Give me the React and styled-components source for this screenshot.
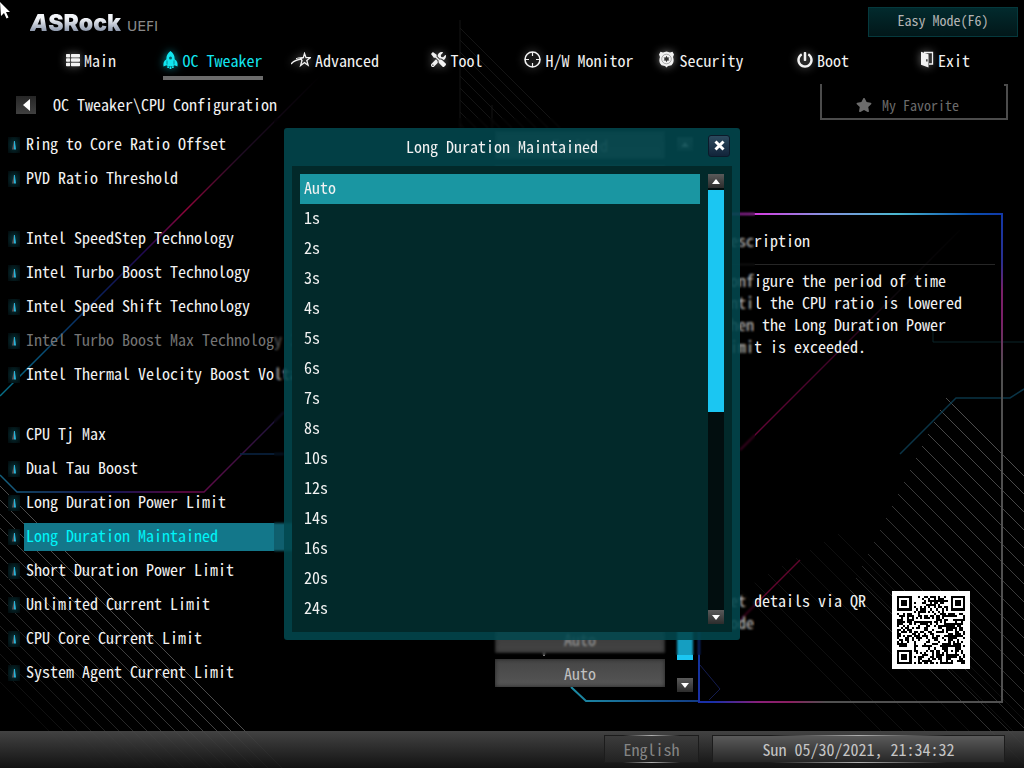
import React from "react";
import styled, { createGlobalStyle, css } from "styled-components";
import { FaThList, FaPowerOff, FaTools, FaStar } from "react-icons/fa";

const Global = createGlobalStyle`
  *, *::before, *::after { box-sizing: border-box; }
  html, body { margin: 0; background: #000; }
  body, button {
    font-family: "Noto Sans Mono CJK JP", "Liberation Mono", monospace;
    font-size: 16px;
    line-height: 22px;
    color: #f2f2f2;
  }
  button { margin: 0; padding: 0; border: 0; background: none; cursor: pointer; }
  ul, h1, h2, p { margin: 0; padding: 0; list-style: none; font-size: 16px; font-weight: 400; }
`;

const Page = styled.div`
  position: relative;
  display: flex;
  flex-direction: column;
  min-height: 100vh;
  overflow: hidden;
  isolation: isolate;
`;

const Backdrop = styled.svg`
  position: absolute;
  inset: 0;
  width: 100%;
  height: 100%;
  z-index: -1;
`;

const Pointer = styled.svg`
  position: absolute;
  left: 0;
  top: 2px;
  z-index: 5;
`;

const Header = styled.header`
  display: flex;
  justify-content: space-between;
  height: 44px;
  padding: 7px 6px 7px 30px;
`;

const Brand = styled.div`
  display: flex;
  align-items: baseline;
  gap: 6px;
  line-height: 32px;
`;

const BrandName = styled.span`
  font: 900 23px/32px Inter, sans-serif;
  background: linear-gradient(#f4f6fa 35%, #8e99ad 75%);
  background-clip: text;
  color: transparent;
`;

const BrandSuffix = styled.span`
  font: 14px/32px "DejaVu Sans", sans-serif;
  color: #8a8a8a;
`;

const EasyMode = styled.button`
  width: 150px;
  height: 30px;
  padding-bottom: 4px;
  border: 1px solid #05393d;
  background: linear-gradient(#022a2d, #021719);
  font-size: 14px;
  color: #b4b4b4;
`;

const Nav = styled.nav`
  display: grid;
  grid-template-columns: repeat(8, 1fr);
  justify-items: center;
  height: 40px;
  padding: 0 18px 0 30px;
`;

const Tab = styled.button`
  display: flex;
  align-items: center;
  gap: 4px;
  height: 36px;
  padding-bottom: 1px;
  border-bottom: 4px solid ${(p) => (p.$active ? "#6c6c6c" : "transparent")};
  color: ${(p) => (p.$active ? "#12e6f0" : "#f2f2f2")};
  white-space: nowrap;
  svg { flex: none; filter: drop-shadow(0 0 4px ${(p) => (p.$active ? "#0a8a96" : "#777")}); }
`;

const Crumbs = styled.div`
  display: flex;
  align-items: center;
  height: 36px;
  margin-bottom: 7px;
  padding: 0 16px;
`;

const BackButton = styled.button`
  display: grid;
  place-items: center;
  width: 20px;
  height: 18px;
  margin-right: 17px;
  margin-top: 6px;
  background: linear-gradient(#262626, #404040);
`;

const CrumbText = styled.h1`
  flex: 1;
  padding-top: 4px;
`;

const Favorite = styled.button`
  display: flex;
  align-items: center;
  justify-content: center;
  gap: 10px;
  width: 188px;
  height: 36px;
  padding: 8px 13px 0 0;
  border: 2px solid #4c4c4c;
  border-top: 0;
  background: linear-gradient(#4c4c4c, #4c4c4c) right top / 2px 2px no-repeat;
  font-size: 14px;
  color: #6c6c6c;
`;

const Body = styled.main`
  display: flex;
  flex: 1;
  padding-right: 21px;
`;

const Settings = styled.ul`
  flex: 1;
  min-width: 0;
`;

const Setting = styled.li`
  display: flex;
  align-items: center;
  height: 34px;
  margin-top: ${(p) => (p.$group ? 26 : 0)}px;
  padding: 2px 0 0 8px;
`;

const Marker = styled.span`
  display: grid;
  place-items: center;
  width: 12px;
  height: 16px;
  margin-right: 4px;
  background: radial-gradient(#06343a, #020c0e 90%);
  &::before {
    content: "";
    width: 4px;
    height: 9px;
    background: linear-gradient(90deg, #5c5458 50%, #29b4d8 50%);
    clip-path: polygon(50% 0, 70% 0, 100% 100%, 0 100%);
  }
`;

const SettingLabel = styled.span`
  flex: 1;
  min-width: 0;
  height: 28px;
  margin-right: 10px;
  padding-left: 2px;
  line-height: 24px;
  overflow: hidden;
  white-space: nowrap;
  color: ${(p) => (p.$disabled ? "#747474" : "#f2f2f2")};
  ${(p) =>
    p.$active &&
    css`
      background: #13778a;
      color: #00f4f8;
    `}
`;

const SettingValue = styled.button`
  width: 170px;
  height: 28px;
  background: linear-gradient(#454545, #565656);
  box-shadow: inset 0 0 4px #222;
  color: #c0c0c0;
`;

const ScrollBar = styled.div`
  display: flex;
  flex-direction: column;
  flex: none;
  width: 16px;
  gap: 2px;
  background: ${(p) => p.$track};
  margin: ${(p) => p.$margin};
`;

const ScrollButton = styled.button`
  display: grid;
  place-items: center;
  height: 14px;
  background: linear-gradient(#5a5a5a, #2c2c2c);
`;

const Thumb = styled.div`
  flex: ${(p) => p.$part};
  background: #1bc6f2;
`;

const Rest = styled.div`
  flex: ${(p) => p.$part};
`;

const Panel = styled.aside`
  display: flex;
  flex-direction: column;
  justify-content: space-between;
  width: 305px;
  margin: 86px 0 28px;
  padding: 16px 8px 34px;
  background:
    linear-gradient(90deg, #c02ad0 10%, #d83ae0 18%, #8a8fe0 40%, #4cb8d0 65%, #0a50b0 90%, #1238a8) top / 100% 2px no-repeat,
    linear-gradient(90deg, #1a2fa8 5%, #8a1f78 20%, #8a1f60 30%, #505050 42%) bottom / 100% 2px no-repeat,
    linear-gradient(#2050c0, #0a3a90 80%, #1a2fa8) left / 2px 100% no-repeat,
    linear-gradient(#1238a8, #2a2f90 10%, #7a2068 16%, #7a2068 22%, #505050 32%) right / 2px 100% no-repeat;
`;

const PanelTitle = styled.h2`
  padding: 0 16px 13px;
  border-bottom: 1px solid #262626;
`;

const PanelText = styled.p`
  padding: 4px 24px 0 16px;
`;

const QrRow = styled.div`
  display: flex;
  justify-content: space-between;
  align-items: flex-end;
  gap: 8px;
  padding: 0 25px 0 16px;
  svg { flex: none; }
`;

const QrText = styled.p`
  height: 80px;
`;

const Footer = styled.footer`
  display: flex;
  align-items: center;
  justify-content: flex-end;
  gap: 13px;
  height: 37px;
  padding: 0 19px 2px 16px;
  background: linear-gradient(rgba(72, 72, 72, 0.92), rgba(20, 20, 20, 0.92));
`;

const FooterButton = styled.button`
  width: ${(p) => p.$width}px;
  height: 28px;
  border: 1px solid #1c1c1c;
  border-image: linear-gradient(90deg, #1c1c1c 20%, #b0b0b0 50%, #1c1c1c 80%) 1;
  background: ${(p) => (p.$bright ? "linear-gradient(#5a5a5a, #262626)" : "linear-gradient(#3c3c3c, #222)")};
  color: ${(p) => (p.$bright ? "#c6c6c6" : "#858585")};
`;

const Overlay = styled.div`
  position: absolute;
  inset: 0;
  z-index: 2;
  display: grid;
  place-items: center;
`;

const Halo = styled.div`
  margin: 5px 0 0 5px;
  padding: 10px 15px 15px 10px;
  background: rgba(0, 0, 0, 0.2);
  backdrop-filter: blur(1px);
`;

const Dialog = styled.section`
  width: 456px;
  padding: 0 8px 8px;
  border-radius: 3px;
  background: rgba(2, 72, 78, 0.88);
`;

const DialogHeader = styled.div`
  display: flex;
  align-items: center;
  height: 38px;
  padding: 0 2px 3px 4px;
`;

const DialogTitle = styled.h2`
  flex: 1;
  text-align: center;
`;

const CloseButton = styled.button`
  display: grid;
  place-items: center;
  width: 22px;
  height: 22px;
  border: 1px solid #0c1a2a;
  border-radius: 3px;
  background: linear-gradient(#2c4a5e, #12243a);
`;

const DialogBody = styled.div`
  display: flex;
  gap: 8px;
  padding: 8px;
  background: #02292a;
`;

const Options = styled.ul`
  flex: 1;
`;

const Option = styled.button`
  display: block;
  width: 100%;
  height: 30px;
  padding: 0 0 4px 4px;
  text-align: left;
  background: ${(p) => (p.$active ? "#1a96a2" : "transparent")};
`;

function Arrow({ down }) {
  return (
    <svg width="8" height="5" viewBox="0 0 8 5" aria-hidden="true">
      <path d={down ? "M0 0h8L4 5z" : "M0 5h8L4 0z"} fill="#fff" />
    </svg>
  );
}

function RocketIcon() {
  return (
    <svg width="15" height="18" viewBox="0 0 15 18" fill="currentColor" aria-hidden="true">
      <path d="M7.500 0C10 1.800 11.500 4.200 11.600 7.300V8.300C14 9.800 15 12 14.500 15.500L11.500 14.300C10.200 15.600 4.800 15.600 3.500 14.300L.5 15.500C0 12 1 9.800 3.400 8.300V7.300C3.500 4.200 5 1.800 7.500 0z" />
      <path d="M4.300 15.300h1.700V17H4.300zM9 15.300h1.700V17H9zM6.600 15.500h1.800V18H6.600z" />
      <circle cx="7.500" cy="7" r="1.500" fill="#06626a" />
      <path d="M4 9.500v4M11 9.500v4" stroke="#06626a" strokeWidth=".7" />
    </svg>
  );
}

function ShootingStarIcon() {
  return (
    <svg width="20" height="16" viewBox="0 0 20 16" fill="none" stroke="currentColor" aria-hidden="true">
      <path d="M13.500 1.500l1.500 4.200h4.200l-3.400 2.800 1.300 4.700-3.600-2.600-3.900 2.900 1.400-5L9.500 6.500l2.800-.8z" strokeWidth="1.300" />
      <path d="M11 7C6.500 7.300 2.800 8.800 0 12" strokeWidth="1.300" />
      <path d="M12 5.700C9 5.500 7 5.900 5 6.800" strokeWidth="1" />
    </svg>
  );
}

function TargetIcon() {
  return (
    <svg width="17" height="17" viewBox="0 0 17 17" fill="none" stroke="currentColor" aria-hidden="true">
      <circle cx="8.500" cy="8.500" r="7.500" strokeWidth="1.600" />
      <path d="M8.500 1v4M8.500 12V16M1 8.500h4M12 8.500h4" strokeWidth="1.200" />
    </svg>
  );
}

function BadgeIcon() {
  return (
    <svg width="17" height="17" viewBox="0 0 17 17" aria-hidden="true">
      <path d="M2.500.8L5 1.500 8.500.5 12 1.500l2.500-.7L16 3.500l-1 2.500c1.200 3 .8 6-1.500 8.200L10 15l-1.500 1.500L7 15l-3.500-.8C1.200 12 .8 9 2 6L1 3.500z" fill="currentColor" />
      <circle cx="8.500" cy="8" r="4.800" fill="none" stroke="#888" strokeWidth=".7" />
      <path d="M8.500 4.800l.9 1.600h2L10.400 8l1 1.600h-2l-.9 1.600-.9-1.600h-2l1-1.600-1-1.600h2z" fill="#333" />
    </svg>
  );
}

function DoorIcon() {
  return (
    <svg width="14" height="17" viewBox="0 0 14 17" aria-hidden="true">
      <path d="M4 1.500h8.500v11.500H9" fill="none" stroke="currentColor" strokeWidth="1.300" />
      <path d="M1 .8l7.500 2.500V16.500L1 13.800z" fill="currentColor" />
      <path d="M6.200 8.300h1.300v2.200H6.200z" fill="#222" />
    </svg>
  );
}

const tabs = [
  ["Main", <FaThList size={14} key="i" />],
  ["OC Tweaker", <RocketIcon key="i" />],
  ["Advanced", <ShootingStarIcon key="i" />],
  ["Tool", <FaTools size={15} key="i" />],
  ["H/W Monitor", <TargetIcon key="i" />],
  ["Security", <BadgeIcon key="i" />],
  ["Boot", <FaPowerOff size={16} key="i" />],
  ["Exit", <DoorIcon key="i" />],
];

const settings = [
  { label: "Ring to Core Ratio Offset", value: "Enabled" },
  { label: "PVD Ratio Threshold", value: "Auto" },
  { label: "Intel SpeedStep Technology", value: "Auto", group: true },
  { label: "Intel Turbo Boost Technology", value: "Enabled" },
  { label: "Intel Speed Shift Technology", value: "Auto" },
  { label: "Intel Turbo Boost Max Technology 3", value: "Enabled", disabled: true },
  { label: "Intel Thermal Velocity Boost Volta", value: "Auto" },
  { label: "CPU Tj Max", value: "Auto", group: true },
  { label: "Dual Tau Boost", value: "Auto" },
  { label: "Long Duration Power Limit", value: "Auto" },
  { label: "Long Duration Maintained", value: "Auto", active: true },
  { label: "Short Duration Power Limit", value: "Auto" },
  { label: "Unlimited Current Limit", value: "Auto" },
  { label: "CPU Core Current Limit", value: "Auto" },
  { label: "System Agent Current Limit", value: "Auto" },
];

const durations = ["Auto", "1s", "2s", "3s", "4s", "5s", "6s", "7s", "8s", "10s", "12s", "14s", "16s", "20s", "24s"];

const QR_SIZE = 33;

function qrPath() {
  let seed = 590;
  let d = "";
  const ring = (x, y, cx, cy) => Math.max(Math.abs(x - cx), Math.abs(y - cy));
  for (let y = 0; y < QR_SIZE; y++) {
    for (let x = 0; x < QR_SIZE; x++) {
      seed = (seed * 1103515245 + 12345) % 2147483648;
      let dark = (seed >> 16) % 100 < 52;
      for (const [cx, cy] of [[3, 3], [29, 3], [3, 29]]) {
        const r = ring(x, y, cx, cy);
        if (r <= 4) dark = r < 2 || r === 3;
      }
      const a = ring(x, y, 26, 26);
      if (a <= 2) dark = a !== 1;
      if (dark) d += `M${x} ${y}h1v1h-1z`;
    }
  }
  return d;
}

function QrCode() {
  return (
    <svg width="78" height="78" viewBox="-2.500 -2.500 38 38" shapeRendering="crispEdges" role="img" aria-label="QR code">
      <rect x="-2.500" y="-2.500" width="38" height="38" fill="#fff" />
      <path d={qrPath()} fill="#000" />
    </svg>
  );
}

const range = (n) => Array.from({ length: n }, (_, i) => i);

function Circuit() {
  return (
    <Backdrop viewBox="0 0 1024 768" preserveAspectRatio="xMidYMid slice" fill="none" aria-hidden="true">
      <defs>
        <linearGradient id="beam" gradientUnits="userSpaceOnUse" x1="0" y1="396" x2="320" y2="76">
          <stop offset="0" stopColor="#067088" />
          <stop offset=".3" stopColor="#08205a" />
          <stop offset=".45" stopColor="#200850" />
          <stop offset=".58" stopColor="#90043a" />
          <stop offset=".75" stopColor="#200c24" />
          <stop offset="1" stopColor="#000" />
        </linearGradient>
        <linearGradient id="trace" gradientUnits="userSpaceOnUse" x1="0" y1="0" x2="284" y2="0">
          <stop offset="0" stopColor="#14607c" />
          <stop offset=".4" stopColor="#201c70" />
          <stop offset=".65" stopColor="#70084c" />
          <stop offset="1" stopColor="#161438" />
        </linearGradient>
        <linearGradient id="link" gradientUnits="userSpaceOnUse" x1="571" y1="0" x2="700" y2="0">
          <stop offset="0" stopColor="#1c8ca4" />
          <stop offset="1" stopColor="#123a84" />
        </linearGradient>
        <linearGradient id="ray" gradientUnits="userSpaceOnUse" x1="740" y1="450" x2="960" y2="230">
          <stop offset="0" stopColor="#6a0438" />
          <stop offset=".4" stopColor="#400428" />
          <stop offset=".7" stopColor="#0c080c" />
          <stop offset="1" stopColor="#020202" />
        </linearGradient>
      </defs>
      <path d="M0 396L320 76" stroke="url(#beam)" strokeWidth="1.500" />
      <path d="M0 475L17 492H204L284 412" stroke="url(#trace)" strokeWidth="1.500" />
      <path d="M240 454H284" stroke="#0a2444" strokeWidth="1.500" />
      {range(15).map((i) => (
        <path key={i} d={`M0 ${486 + i * 14}l290 290`} stroke="#fff" strokeOpacity={0.3 - i * 0.018} />
      ))}
      {range(9).map((i) => (
        <path key={i} d={`M460 ${28 + i * 12}l${100 - i * 12} ${100 - i * 12}`} stroke="#fff" strokeOpacity={0.08} />
      ))}
      <path d="M460 20V128M492 105V128" stroke="#141414" />
      {range(17).map((i) => (
        <path key={i} d={`M${850 + i * 6} ${590 - i * 12}l220 220`} stroke="#fff" strokeOpacity={0.14 + i * 0.01} />
      ))}
      {range(8).map((i) => (
        <path key={i} d={`M${740 + i * 14} ${590 - i * 8}l190 190`} stroke="#fff" strokeOpacity={0.06} />
      ))}
      <path d="M740 450L960 230" stroke="url(#ray)" strokeWidth="1.500" />
      <path d="M740 620L800 560" stroke="#60042c" strokeWidth="1.500" />
      <path d="M933 320V342H1024" stroke="#0a2428" />
      <path d="M900 454L956 398H1010L1024 389" stroke="#0a3446" strokeWidth="1.500" />
      <path d="M544 648v8" stroke="#7a7a7a" strokeWidth="2" />
      <path d="M571 687L586 701H700" stroke="url(#link)" strokeWidth="2" />
      <path d="M700 665L720 689L709 700" stroke="#141c50" />
    </Backdrop>
  );
}

export default function App() {
  return (
    <Page>
      <Global />
      <Circuit />
      <Pointer width="11" height="17" viewBox="0 0 11 17" aria-hidden="true">
        <path d="M0 0L10 10H6L8.500 15.500L6.500 16.500L4 11L1 14z" fill="#fff" />
      </Pointer>
      <Header>
        <Brand>
          <BrandName><i>A</i>SRock</BrandName>
          <BrandSuffix>UEFI</BrandSuffix>
        </Brand>
        <EasyMode type="button">Easy Mode(F6)</EasyMode>
      </Header>
      <Nav>
        {tabs.map(([label, icon]) => (
          <Tab type="button" key={label} $active={label === "OC Tweaker"}>
            {icon}
            {label}
          </Tab>
        ))}
      </Nav>
      <Crumbs>
        <BackButton type="button" aria-label="Back">
          <svg width="7" height="12" viewBox="0 0 7 12" aria-hidden="true">
            <path d="M7 0V12L0 6z" fill="#fff" />
          </svg>
        </BackButton>
        <CrumbText>OC Tweaker\CPU Configuration</CrumbText>
        <Favorite type="button">
          <FaStar size={16} />
          My Favorite
        </Favorite>
      </Crumbs>
      <Body>
        <Settings>
          {settings.map((s) => (
            <Setting key={s.label} $group={s.group}>
              <Marker />
              <SettingLabel $active={s.active} $disabled={s.disabled}>{s.label}</SettingLabel>
              <SettingValue type="button" disabled={s.disabled} aria-label={`${s.label}: ${s.value}`}>{s.value}</SettingValue>
            </Setting>
          ))}
        </Settings>
        <ScrollBar $track="transparent" $margin="10px 5px 39px 12px">
          <ScrollButton type="button" aria-label="Scroll settings up"><Arrow /></ScrollButton>
          <Rest $part={7} />
          <Thumb $part={30} />
          <Rest $part={1} />
          <ScrollButton type="button" aria-label="Scroll settings down"><Arrow down /></ScrollButton>
        </ScrollBar>
        <Panel>
          <div>
            <PanelTitle>Description</PanelTitle>
            <PanelText>
              Configure the period of time until the CPU ratio is lowered when the Long Duration Power Limit is exceeded.
            </PanelText>
          </div>
          <QrRow>
            <QrText>Get details via QR Code</QrText>
            <QrCode />
          </QrRow>
        </Panel>
      </Body>
      <Footer>
        <FooterButton type="button" $width={95}>English</FooterButton>
        <FooterButton type="button" $width={293} $bright>Sun 05/30/2021, 21:34:32</FooterButton>
      </Footer>
      <Overlay>
        <Halo>
          <Dialog role="dialog" aria-labelledby="dialog-title">
            <DialogHeader>
              <DialogTitle id="dialog-title">Long Duration Maintained</DialogTitle>
              <CloseButton type="button" aria-label="Close">
                <svg width="11" height="11" viewBox="0 0 11 11" aria-hidden="true">
                  <path d="M1.500 1.500l8 8M9.500 1.500l-8 8" stroke="#fff" strokeWidth="3" />
                </svg>
              </CloseButton>
            </DialogHeader>
            <DialogBody>
              <Options>
                {durations.map((d) => (
                  <li key={d}>
                    <Option type="button" $active={d === "Auto"}>{d}</Option>
                  </li>
                ))}
              </Options>
              <ScrollBar $track="#020e0f" $margin="0">
                <ScrollButton type="button" aria-label="Scroll options up"><Arrow /></ScrollButton>
                <Thumb $part={8} />
                <Rest $part={7} />
                <ScrollButton type="button" aria-label="Scroll options down"><Arrow down /></ScrollButton>
              </ScrollBar>
            </DialogBody>
          </Dialog>
        </Halo>
      </Overlay>
    </Page>
  );
}
